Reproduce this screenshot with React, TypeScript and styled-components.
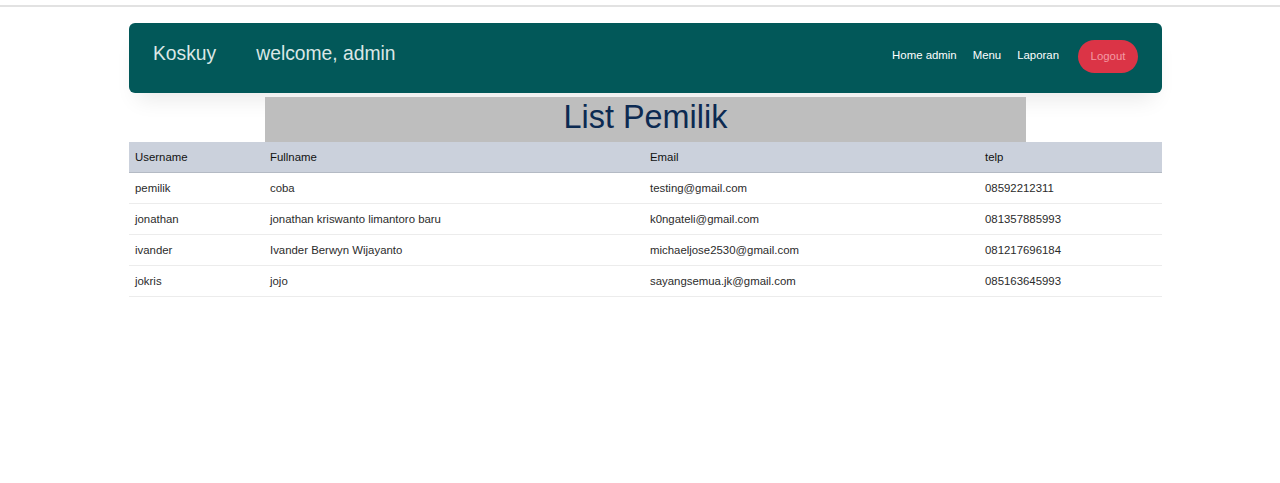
import React from "react";
import styled, { createGlobalStyle } from "styled-components";

const Global = createGlobalStyle`
  html, body { margin: 0; padding: 0; background: #ffffff; }
  body { font-family: "Liberation Sans", Arial, sans-serif; }
`;

const TopRule = styled.div`
  margin-top: 5px;
  height: 2px;
  background: #e2e2e2;
`;

const Container = styled.div`
  width: 1033px;
  margin: 16px 0 0 129px;
`;

const NavBar = styled.nav`
  height: 70px;
  box-sizing: border-box;
  background: #025859;
  border-radius: 6px;
  display: flex;
  align-items: center;
  padding: 0 24px;
  box-shadow: 0 14px 22px -8px rgba(0, 0, 0, 0.09);
`;

const Brand = styled.span`
  font-size: 19.3px;
  color: #dbe7e6;
  margin-top: -9px;
`;

const Welcome = styled.span`
  font-size: 19.3px;
  color: #dbe7e6;
  margin-left: 40px;
  margin-top: -9px;
`;

const NavLinks = styled.div`
  margin-left: auto;
  display: flex;
  align-items: center;
  gap: 16px;
  margin-top: -6px;
`;

const NavLink = styled.a`
  font-size: 11.4px;
  color: #ffffff;
  text-decoration: none;
`;

const LogoutButton = styled.button`
  margin-left: 3px;
  height: 33px;
  width: 60px;
  border: none;
  border-radius: 17px;
  background: #db3446;
  color: #f39aa4;
  font-family: "Liberation Sans", Arial, sans-serif;
  font-size: 11.4px;
  padding: 0;
  margin-top: 2px;
`;

const TitleBox = styled.h1`
  width: 761px;
  height: 45px;
  margin: 4px auto 0;
  background: #bebebe;
  color: #0c2a52;
  font-weight: 400;
  font-size: 32.4px;
  line-height: 40px;
  text-align: center;
`;

const Table = styled.table`
  width: 1033px;
  border-collapse: collapse;
  table-layout: fixed;
  font-size: 11.4px;
`;

const HeadRow = styled.tr`
  background: #cbd1dc;
  border-bottom: 1px solid #b4bac4;
`;

const Th = styled.th<{ $w: number }>`
  box-sizing: border-box;
  width: ${(p) => p.$w}px;
  height: 30px;
  padding: 0 6px;
  text-align: left;
  font-weight: 400;
  color: #111;
`;

const Row = styled.tr`
  border-bottom: 1px solid #ececec;
`;

const Td = styled.td`
  height: 30px;
  padding: 0 6px;
  color: #2b2b2b;
`;

const cols = [
  { label: "Username", w: 135 },
  { label: "Fullname", w: 380 },
  { label: "Email", w: 335 },
  { label: "telp", w: 183 },
];

const rows = [
  ["pemilik", "coba", "testing@gmail.com", "08592212311"],
  ["jonathan", "jonathan kriswanto limantoro baru", "k0ngateli@gmail.com", "081357885993"],
  ["ivander", "Ivander Berwyn Wijayanto", "michaeljose2530@gmail.com", "081217696184"],
  ["jokris", "jojo", "sayangsemua.jk@gmail.com", "085163645993"],
];

export default function App() {
  return (
    <>
      <Global />
      <TopRule />
      <Container>
        <NavBar>
          <Brand>Koskuy</Brand>
          <Welcome>welcome, admin</Welcome>
          <NavLinks>
            <NavLink href="#">Home admin</NavLink>
            <NavLink href="#">Menu</NavLink>
            <NavLink href="#">Laporan</NavLink>
            <LogoutButton>Logout</LogoutButton>
          </NavLinks>
        </NavBar>
        <TitleBox>List Pemilik</TitleBox>
        <Table>
          <thead>
            <HeadRow>
              {cols.map((c) => (
                <Th key={c.label} $w={c.w}>
                  {c.label}
                </Th>
              ))}
            </HeadRow>
          </thead>
          <tbody>
            {rows.map((r) => (
              <Row key={r[0]}>
                {r.map((cell, i) => (
                  <Td key={i}>{cell}</Td>
                ))}
              </Row>
            ))}
          </tbody>
        </Table>
      </Container>
    </>
  );
}
